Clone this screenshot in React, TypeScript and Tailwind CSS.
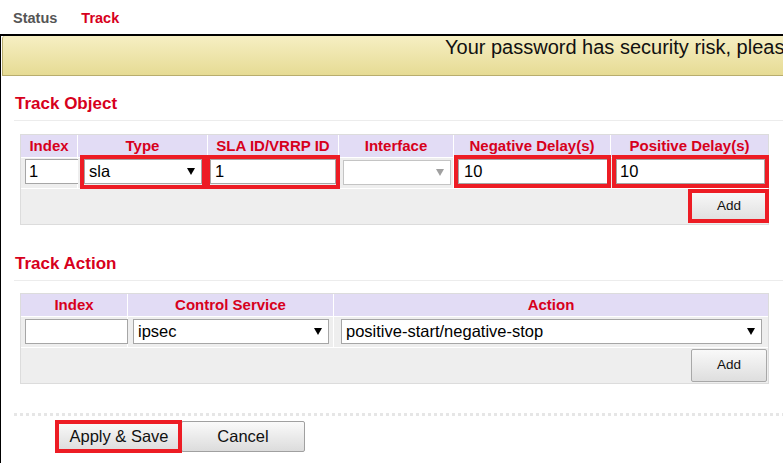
import React from "react";

const obj = [
  { label: "Index", w: "w-[56px]" },
  { label: "Type", w: "w-[129px]" },
  { label: "SLA ID/VRRP ID", w: "w-[130px]" },
  { label: "Interface", w: "w-[114px]" },
  { label: "Negative Delay(s)", w: "w-[156px]" },
  { label: "Positive Delay(s)", w: "w-[157px]" },
];

const act = [
  { label: "Index", w: "w-[106px]" },
  { label: "Control Service", w: "w-[205px]" },
  { label: "Action", w: "w-[434px]" },
];

// red annotation frame drawn over a control
function Mark({ className }: { className: string }) {
  return <div className={`pointer-events-none absolute z-10 border-4 border-[#ed1c24] ${className}`} />;
}

function Arrow({ dim }: { dim?: boolean }) {
  return (
    <svg width="8" height="7" viewBox="0 0 8 7" className="shrink-0">
      <polygon points="0,0 8,0 4,7" fill={dim ? "#a0a0a0" : "#000"} />
    </svg>
  );
}

function Field({ value, className }: { value?: string; className: string }) {
  return (
    <div className={`flex h-[25px] items-center border border-[#a6a6a6] bg-white pl-[3px] text-[16.5px] leading-none ${className}`}>
      {value}
    </div>
  );
}

function Select({ value, dim, className }: { value?: string; dim?: boolean; className: string }) {
  return (
    <div className={`flex h-[25px] items-center justify-between border border-[#a6a6a6] bg-white pl-[4px] pr-[6px] text-[16.5px] leading-none ${className}`}>
      <span>{value}</span>
      <Arrow dim={dim} />
    </div>
  );
}

function AddButton() {
  return (
    <button className="flex h-[33px] w-[76px] items-center justify-center rounded-[2px] border border-[#a8a8a8] bg-[linear-gradient(#f9f9f9,#dedede)] text-[13.5px] text-[#111]">
      Add
    </button>
  );
}

function Header({ cols }: { cols: { label: string; w: string }[] }) {
  return (
    <div className="flex h-[22px] gap-px">
      {cols.map((c) => (
        <div key={c.label} className={`${c.w} flex items-center justify-center pt-px bg-[#e2dcf5] text-[15px] font-bold text-[#d7001c]`}>
          {c.label}
        </div>
      ))}
    </div>
  );
}

function Section({ title, top }: { title: string; top: string }) {
  return (
    <div className={`${top} ml-[13px] border-b border-[#ececec] pb-[6px] pl-[1px] pt-px text-[17px] font-bold leading-[20px] text-[#d7001c]`}>
      {title}
    </div>
  );
}

export default function App() {
  return (
    <div className="h-[463px] w-[783px] overflow-hidden bg-white font-['Liberation_Sans',Arial,sans-serif] text-black">
      {/* tabs */}
      <div className="flex h-[34px] pl-[13px] pt-[10px] text-[14.5px] font-bold leading-[16px]">
        <span className="text-[#555]">Status</span>
        <span className="ml-[24px] text-[#d7001c]">Track</span>
      </div>

      <div className="h-[429px] border-l border-t-2 border-black">
        {/* warning banner */}
        <div className="ml-[1px] h-[40px] overflow-hidden whitespace-nowrap rounded-tl-[3px] border-b border-l border-[#b8ad6e] bg-[linear-gradient(#f6efc3,#e6db94)] pl-[442px] text-[20px] leading-[23px] text-[#111]">
          Your password has security risk, please change it
        </div>

        <Section title="Track Object" top="mt-[17px]" />

        <div className="ml-[19px] mt-[13px] w-[749px] border border-[#dcdcdc]">
          <div className="flex flex-col gap-px bg-white">
            <Header cols={obj} />
            <div className="flex h-[30px] gap-px">
              <div className="w-[56px] bg-[#eee] pl-[4px] pt-[1px]">
                <Field value="1" className="w-[54px]" />
              </div>
              <div className="relative w-[129px] bg-[#eee] pl-[6px] pt-[1px]">
                <Select value="sla" className="w-[118px]" />
                <Mark className="left-[2px] -top-[3px] h-[34px] w-[126px]" />
              </div>
              <div className="relative w-[130px] bg-[#eee] pl-[2px] pt-[1px]">
                <Field value="1" className="w-[126px] pl-[4px]" />
                <Mark className="-left-[2px] -top-[3px] h-[34px] w-[134px]" />
              </div>
              <div className="w-[114px] bg-[#eee] pl-[4px] pt-[2px]">
                <Select dim className="w-[108px] border-[#c4c4c4]" />
              </div>
              <div className="relative w-[156px] bg-[#eee] pl-[4px] pt-[1px]">
                <Field value="10" className="w-[150px] pl-[5px]" />
                <Mark className="left-0 -top-[3px] h-[33px] w-[157px]" />
              </div>
              <div className="relative w-[157px] bg-[#eee] pl-[5px] pt-[1px]">
                <Field value="10" className="w-[149px] pl-[3px]" />
                <Mark className="left-px -top-[3px] h-[33px] w-[157px]" />
              </div>
            </div>
            <div className="flex h-[35px] justify-end bg-[#eee] pr-px pt-px">
              <div className="relative">
                <AddButton />
                <Mark className="-left-[3px] -top-px h-[34px] w-[81px]" />
              </div>
            </div>
          </div>
        </div>

        <Section title="Track Action" top="mt-[28px]" />

        <div className="ml-[19px] mt-[12px] w-[749px] border border-[#dcdcdc]">
          <div className="flex flex-col gap-px bg-white">
            <Header cols={act} />
            <div className="flex h-[30px] gap-px">
              <div className="w-[106px] bg-[#eee] pl-[4px] pt-[2px]">
                <Field className="w-[103px]" />
              </div>
              <div className="w-[205px] bg-[#eee] pl-[5px] pt-[2px]">
                <Select value="ipsec" className="w-[196px]" />
              </div>
              <div className="w-[434px] bg-[#eee] pl-[7px] pt-[2px]">
                <Select value="positive-start/negative-stop" className="w-[421px]" />
              </div>
            </div>
            <div className="flex h-[35px] justify-end bg-[#eee] pr-px pt-px">
              <AddButton />
            </div>
          </div>
        </div>

        {/* dotted separator */}
        <div className="ml-[13px] mt-[29px] h-[3px] bg-[linear-gradient(to_right,#e6e6e6_50%,transparent_50%)] bg-[length:6px_3px]" />

        <div className="ml-[56px] mt-[5px] flex">
          <div className="relative">
            <button className="h-[31px] w-[124px] rounded-[2px] border border-[#a0a0a0] bg-[linear-gradient(#fafafa,#dcdcdc)] text-[16.5px] text-[#111]">
              Apply &amp; Save
            </button>
            <Mark className="-left-[2px] -top-px h-[33px] w-[127px]" />
          </div>
          <button className="h-[31px] w-[124px] rounded-[2px] border border-[#a0a0a0] bg-[linear-gradient(#fafafa,#dcdcdc)] text-[16.5px] text-[#111]">
            Cancel
          </button>
        </div>
      </div>
    </div>
  );
}
